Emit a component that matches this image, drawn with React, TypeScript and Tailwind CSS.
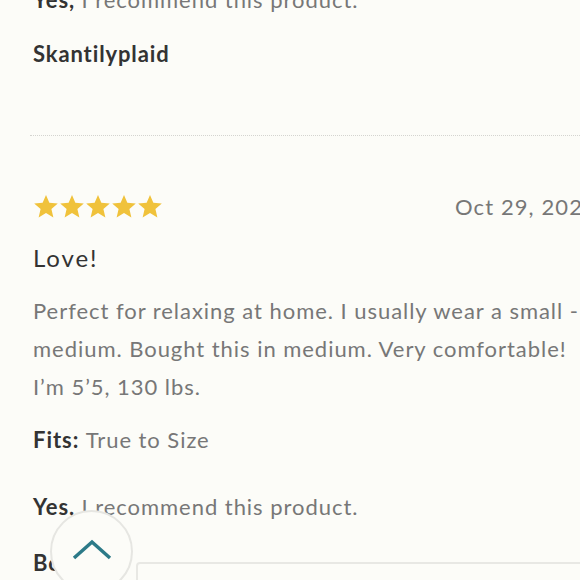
import React from "react";

function Star() {
  return (
    <svg width="26" height="25" viewBox="0 0 24 23" className="shrink-0">
      <path d="M12 0.8l3.1 7.2 7.8.7-5.9 5.2 1.8 7.7L12 17.6 5.2 21.6 7 13.9 1.1 8.7l7.8-.7z" fill="#f0c23b" />
    </svg>
  );
}

export default function App() {
  return (
    <div
      className="relative w-[580px] h-[580px] overflow-hidden bg-[#fcfcf8] tracking-[0.06em]"
      style={{ fontFamily: "Lato, 'Noto Sans', sans-serif" }}
    >
      <div className="w-[700px] pl-[33px] -mt-[14px]">
        <div className="text-[22px] leading-[28px] whitespace-nowrap">
          <span className="font-bold text-[#333]">Yes, </span>
          <span className="text-[#777]">I recommend this product.</span>
        </div>
        <div className="mt-[25px] text-[22px] leading-[30px] font-bold text-[#333] tracking-[0.04em]">Skantilyplaid</div>
        <div className="mt-[66px] -ml-[3px] border-t border-dotted border-[#d4d4d0]" />
        <div className="mt-[54px] flex items-center">
          <div className="flex w-[422px]">
            <Star />
            <Star />
            <Star />
            <Star />
            <Star />
          </div>
          <div className="text-[22px] text-[#777] whitespace-nowrap tracking-[0.05em]">Oct 29, 2020</div>
        </div>
        <div className="mt-[20px] text-[24px] leading-[30px] text-[#333] tracking-[0.08em]">Love!</div>
        <div className="mt-[19px] text-[22px] leading-[38px] text-[#777] whitespace-nowrap">
          <div>Perfect for relaxing at home. I usually wear a small -</div>
          <div>medium. Bought this in medium. Very comfortable!</div>
          <div>I’m 5’5, 130 lbs.</div>
        </div>
        <div className="mt-[19px] text-[22px] leading-[30px] whitespace-nowrap">
          <span className="font-bold text-[#333]">Fits: </span>
          <span className="text-[#777]">True to Size</span>
        </div>
        <div className="mt-[37px] text-[22px] leading-[30px] whitespace-nowrap">
          <span className="font-bold text-[#333]">Yes, </span>
          <span className="text-[#777]">I recommend this product.</span>
        </div>
        <div className="mt-[26px] flex items-start">
          <div className="text-[22px] leading-[30px] font-bold text-[#333] w-[103px]">Body</div>
          <div className="mt-[14px] h-[60px] flex-1 rounded-[4px] border-2 border-[#e8e8e4]" />
        </div>
      </div>
      <div className="absolute left-[50px] top-[510px] w-[83px] h-[83px] rounded-full border-2 border-[#e6e6e2] bg-[#fcfcf8] flex items-center justify-center">
        <svg width="40" height="24" viewBox="0 0 40 24" className="-mt-[4px]">
          <path d="M2 20L20 4l18 16" fill="none" stroke="#2c7a88" strokeWidth="3.5" />
        </svg>
      </div>
    </div>
  );
}
